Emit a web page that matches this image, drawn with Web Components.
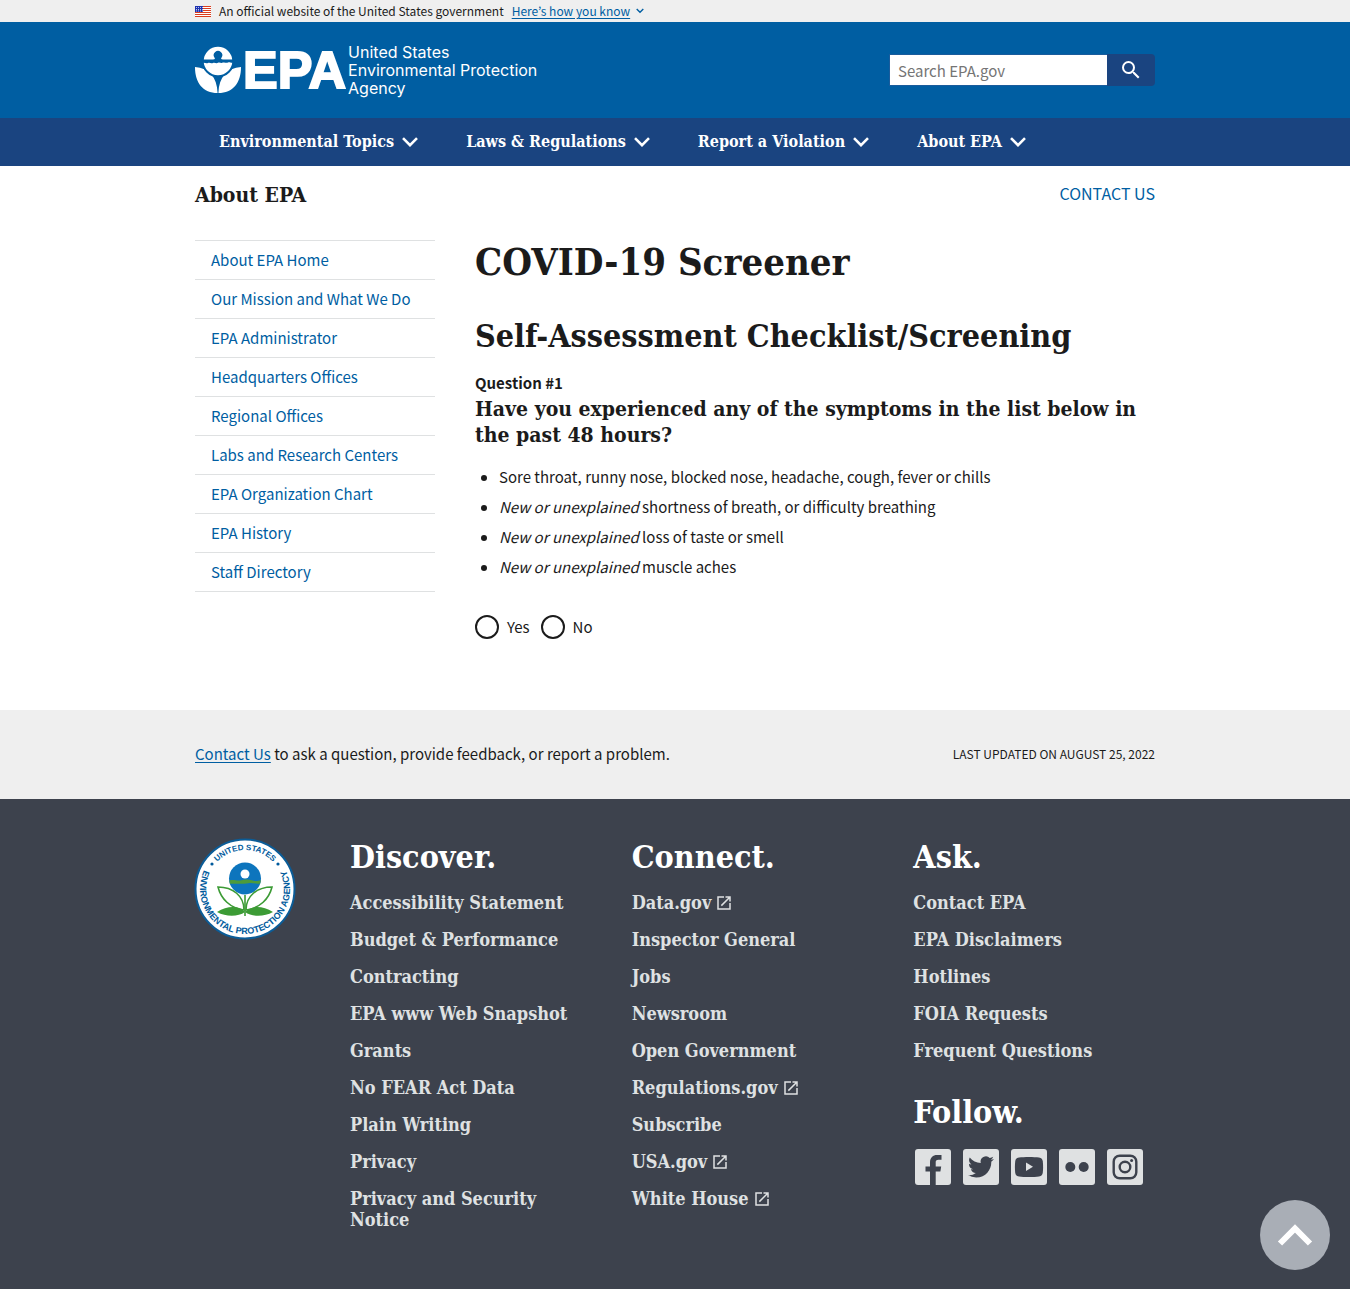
<!DOCTYPE html>
<html lang="en">
<head>
<meta charset="utf-8">
<meta name="viewport" content="width=device-width, initial-scale=1">
<title>COVID-19 Screener | US EPA</title>
<style>
  :root {
    --sans: "Noto Sans CJK JP", "Noto Sans", sans-serif;
    --serif: "DejaVu Serif Condensed", "DejaVu Serif", serif;
    --ink: #1b1b1b;
    --link: #005ea2;
    --navy: #1a4480;
    --pale: #dfe1e2;
    --slate: #3d424d;
    --mist: #efefef;
    --gutter: max(32px, calc((100% - 960px) / 2));
  }
  body { margin: 0; background: #fff; color: var(--ink); font: 15px/26px var(--sans); }
</style>
</head>
<body>
<gov-banner></gov-banner>
<epa-header></epa-header>
<epa-nav>
  <epa-nav-item>Environmental Topics</epa-nav-item>
  <epa-nav-item>Laws &amp; Regulations</epa-nav-item>
  <epa-nav-item>Report a Violation</epa-nav-item>
  <epa-nav-item>About EPA</epa-nav-item>
</epa-nav>
<epa-page>
  <span slot="area">About EPA</span>
  <side-nav slot="side">
    <side-link>About EPA Home</side-link>
    <side-link>Our Mission and What We Do</side-link>
    <side-link>EPA Administrator</side-link>
    <side-link>Headquarters Offices</side-link>
    <side-link>Regional Offices</side-link>
    <side-link>Labs and Research Centers</side-link>
    <side-link>EPA Organization Chart</side-link>
    <side-link>EPA History</side-link>
    <side-link>Staff Directory</side-link>
  </side-nav>
  <covid-screener></covid-screener>
</epa-page>
<page-feedback></page-feedback>
<epa-footer>
  <footer-group slot="discover" heading="Discover.">
    <footer-link>Accessibility Statement</footer-link>
    <footer-link>Budget &amp; Performance</footer-link>
    <footer-link>Contracting</footer-link>
    <footer-link>EPA www Web Snapshot</footer-link>
    <footer-link>Grants</footer-link>
    <footer-link>No FEAR Act Data</footer-link>
    <footer-link>Plain Writing</footer-link>
    <footer-link>Privacy</footer-link>
    <footer-link>Privacy and Security Notice</footer-link>
  </footer-group>
  <footer-group slot="connect" heading="Connect.">
    <footer-link external>Data.gov</footer-link>
    <footer-link>Inspector General</footer-link>
    <footer-link>Jobs</footer-link>
    <footer-link>Newsroom</footer-link>
    <footer-link>Open Government</footer-link>
    <footer-link external>Regulations.gov</footer-link>
    <footer-link>Subscribe</footer-link>
    <footer-link external>USA.gov</footer-link>
    <footer-link external>White House</footer-link>
  </footer-group>
  <footer-group slot="ask" heading="Ask.">
    <footer-link>Contact EPA</footer-link>
    <footer-link>EPA Disclaimers</footer-link>
    <footer-link>Hotlines</footer-link>
    <footer-link>FOIA Requests</footer-link>
    <footer-link>Frequent Questions</footer-link>
  </footer-group>
  <footer-group slot="ask" heading="Follow.">
    <social-links></social-links>
  </footer-group>
</epa-footer>
<back-to-top></back-to-top>

<script>
const define = (name, html) => {
  const template = document.createElement('template');
  template.innerHTML = html;
  customElements.define(name, class extends HTMLElement {
    constructor() {
      super();
      this.attachShadow({ mode: 'open' }).append(template.content.cloneNode(true));
    }
    connectedCallback() {
      const heading = this.shadowRoot.querySelector('[data-heading]');
      if (heading) heading.textContent = this.getAttribute('heading');
    }
  });
};

define('gov-banner', `
<style>
  :host { display: block; background: var(--mist); padding: 0 var(--gutter); font-size: 12px; line-height: 22px; }
  div { display: flex; align-items: center; gap: 8px; }
  a { color: var(--link); display: flex; align-items: center; gap: 6px; text-decoration: none; }
  u { text-underline-offset: 2px; }
  svg { display: block; }
</style>
<div>
  <svg width="16" height="11" viewBox="0 0 16 11" aria-hidden="true">
    <rect width="16" height="11" fill="#fff"/>
    <path d="M0 .5h16M0 2.5h16M0 4.5h16M0 6.5h16M0 8.5h16M0 10.5h16" stroke="#db3e1f"/>
    <rect width="8" height="6" fill="#1e33b1"/>
    <path d="M1 1.5h7M1 3.5h7M1 5h7" stroke="#fff" stroke-width=".7" stroke-dasharray="1 1"/>
  </svg>
  <span>An official website of the United States government</span>
  <a href="#"><u>Here’s how you know</u>
    <svg width="8" height="6" viewBox="0 0 8 6" fill="none" stroke="currentColor" stroke-width="1.4"><path d="M.7 1 4 4.3 7.3 1"/></svg>
  </a>
</div>`);

define('epa-logo', `
<style>
  :host { display: block; }
  a { display: flex; align-items: center; color: #fff; text-decoration: none; }
  svg { display: block; }
  b { font: bold 52px/48px "Liberation Sans", sans-serif; -webkit-text-stroke: 2px #fff; padding: 0 2px; }
  span { display: block; font: 16px/18px Inter, "Liberation Sans", sans-serif; }
</style>
<a href="#">
  <svg width="46" height="48" viewBox="0 0 46 48" aria-hidden="true">
    <path fill="#fff" d="M0 21C14 22 22 31 22.600 47 8 47 0 37 0 21zM46 21C32 22 24 31 23.400 47 38 47 46 37 46 21z"/>
    <circle cx="23" cy="15" r="15.300" fill="#fff" stroke="#005ea2" stroke-width="2"/>
    <path fill="#005ea2" d="M8 13.6h10c2 0 2.300-.8 1.400-2a4.300 4.300 0 1 1 7.200 0c-.9 1.200-.6 2 1.400 2h10v3c-2 .9-3-.9-5-.2-2 1.200-3-.5-5 .2-2 1.200-3-.6-5 .2-2 1-3-.6-5 .1-2 1-3-.6-5 .1-2 .6-3-.4-5-.1z"/>
  </svg>
  <b>EPA</b>
  <div><span>United States</span><span>Environmental Protection</span><span>Agency</span></div>
</a>`);

define('site-search', `
<style>
  :host { display: block; }
  form { display: flex; margin: 0; }
  input { box-sizing: border-box; width: 218px; height: 32px; border: 1px solid #1a5c9c; border-right: 0; padding: 0 8px; background: #fff; border-radius: 0; font: 15px/20px var(--sans); color: var(--ink); }
  input::placeholder { color: #757575; opacity: 1; }
  button { width: 48px; height: 32px; border: 0; padding: 0; border-radius: 0 4px 4px 0; background: var(--navy); display: grid; place-items: center; }
</style>
<form role="search">
  <input type="search" aria-label="Search" placeholder="Search EPA.gov">
  <button type="button" aria-label="Search">
    <svg width="24" height="24" viewBox="0 0 24 24" fill="#fff"><path d="M15.500 14h-.79l-.28-.27A6.470 6.470 0 0 0 16 9.500 6.500 6.500 0 1 0 9.500 16c1.610 0 3.090-.59 4.230-1.570l.27.280v.79l5 4.990L20.490 19zm-6 0a4.500 4.500 0 1 1 0-9 4.500 4.500 0 0 1 0 9z"/></svg>
  </button>
</form>`);

define('epa-header', `
<style>
  :host { display: flex; justify-content: space-between; align-items: center; background: var(--link); padding: 22px var(--gutter); height: 52px; }
</style>
<epa-logo></epa-logo><site-search></site-search>`);

define('epa-nav', `
<style>
  :host { display: block; background: var(--navy); padding: 0 var(--gutter); }
  nav { display: flex; }
</style>
<nav><slot></slot></nav>`);

define('epa-nav-item', `
<style>
  :host { display: block; }
  button { display: flex; align-items: center; gap: 8px; border: 0; background: none; color: #fff; padding: 0 24px; height: 48px; font: bold 16px/20px var(--serif); white-space: nowrap; }
</style>
<button type="button"><slot></slot>
  <svg width="16" height="10" viewBox="0 0 16 10" fill="none" stroke="#fff" stroke-width="2.600"><path d="M1 1.200 8 8.200l7-7"/></svg>
</button>`);

define('epa-page', `
<style>
  :host { display: block; padding: 16px var(--gutter) 70px; }
  header { display: flex; justify-content: space-between; align-items: flex-start; height: 26px; padding-bottom: 32px; }
  h2 { margin: 0; font: bold 21px/26px var(--serif); }
  a { color: var(--link); text-decoration: none; text-transform: uppercase; font-size: 16px; line-height: 22px; }
  main { display: grid; grid-template-columns: minmax(0, 240px) minmax(0, 680px); gap: 40px; }
</style>
<header><h2><slot name="area"></slot></h2><a href="#">Contact Us</a></header>
<main><slot name="side"></slot><slot></slot></main>`);

define('side-nav', `
<style>
  :host { display: block; }
  nav { border-bottom: 1px solid #dfe1e2; }
</style>
<nav><slot></slot></nav>`);

define('side-link', `
<style>
  :host { display: block; border-top: 1px solid #dfe1e2; }
  a { display: block; padding: 6px 16px; color: var(--link); text-decoration: none; }
</style>
<a href="#"><slot></slot></a>`);

define('covid-screener', `
<style>
  :host { display: block; }
  h1, h2, h3, p, ul { margin: 0; }
  h1 { font: bold 38px/44px var(--serif); margin-bottom: 30px; }
  h2 { font: bold 32px/44px var(--serif); margin-bottom: 12px; }
  h3 { font: bold 21px/26px var(--serif); margin-bottom: 16px; }
  strong { display: block; }
  ul { padding-left: 24px; display: flex; flex-direction: column; gap: 4px; }
  fieldset { border: 0; margin: 34px 0 0; padding: 0; display: flex; gap: 11px; }
  label { display: flex; align-items: center; gap: 8px; }
  input { appearance: none; box-sizing: border-box; width: 24px; height: 24px; margin: 0; border: 2px solid var(--ink); border-radius: 50%; background: #fff; }
  input:checked { background: var(--link); box-shadow: inset 0 0 0 3px #fff; }
</style>
<h1>COVID-19 Screener</h1>
<h2>Self-Assessment Checklist/Screening</h2>
<strong>Question #1</strong>
<h3>Have you experienced any of the symptoms in the list below in the past 48 hours?</h3>
<ul>
  <li>Sore throat, runny nose, blocked nose, headache, cough, fever or chills</li>
  <li><em>New or unexplained</em> shortness of breath, or difficulty breathing</li>
  <li><em>New or unexplained</em> loss of taste or smell</li>
  <li><em>New or unexplained</em> muscle aches</li>
</ul>
<fieldset>
  <label><input type="radio" name="symptoms" value="yes">Yes</label>
  <label><input type="radio" name="symptoms" value="no">No</label>
</fieldset>`);

define('page-feedback', `
<style>
  :host { display: flex; justify-content: space-between; align-items: center; background: var(--mist); padding: 31px var(--gutter) 32px; }
  a { color: var(--link); text-underline-offset: 2px; }
  small { font-size: 12px; text-transform: uppercase; }
</style>
<span><a href="#">Contact Us</a> to ask a question, provide feedback, or report a problem.</span>
<small>Last updated on August 25, 2022</small>`);

define('epa-seal', `
<style>
  :host { display: block; }
  svg { display: block; overflow: visible; }
  text { font: bold 8px "Liberation Sans", sans-serif; fill: #005a9c; }
  .ring { font-size: 9px; }
</style>
<svg width="100" height="100" viewBox="0 0 100 100" role="img" aria-label="EPA seal">
  <defs>
    <path id="top" d="M11 50a39 39 0 0 1 78 0"/>
    <path id="ring" d="M50 5a45 45 0 0 0 0 90a45 45 0 0 0 0-90"/>
  </defs>
  <circle cx="50" cy="50" r="49.500" fill="#fff" stroke="#0b5c97" stroke-width="2"/>
  <text text-anchor="middle"><textPath href="#top" startOffset="50%">UNITED STATES</textPath></text>
  <text class="ring" text-anchor="middle"><textPath href="#ring" startOffset="50%">ENVIRONMENTAL PROTECTION AGENCY</textPath></text>
  <circle cx="17" cy="25" r="1.600" fill="#005a9c"/><circle cx="83" cy="25" r="1.600" fill="#005a9c"/>
  <circle cx="50" cy="39.500" r="16" fill="#0d75bd"/>
  <path d="M34.300 41.500c5-1.500 8 1 12-.3s8-.8 11.500.3 5 .3 8-.3l-.6 3.200c-4 1-8-1-12-.2s-9 .5-18.300.5z" fill="#4d9b3c"/>
  <circle cx="50" cy="35" r="4.500" fill="#fff"/>
  <path d="M50 56v21" stroke="#3c9b35" stroke-width="1.600"/>
  <path d="M49 71C35 69 26 60 23 48c15 0 26 9 26 23zM51 71C65 69 74 60 77 48 62 48 51 57 51 71z" fill="#fff" stroke="#3c9b35" stroke-width="1.600"/>
  <path d="M22 73c11-7 23-6 28 0-7 5-19 5-28 0zM78 73c-11-7-23-6-28 0 7 5 19 5 28 0z" fill="#3c9b35"/>
</svg>`);

define('epa-footer', `
<style>
  :host { display: block; background: var(--slate); color: var(--pale); padding: 40px var(--gutter) 59px; }
  footer { display: grid; grid-template-columns: 115px repeat(3, minmax(0, 1fr)); gap: 40px; }
  .stack { display: flex; flex-direction: column; gap: 33px; }
</style>
<footer>
  <epa-seal></epa-seal>
  <slot name="discover"></slot>
  <slot name="connect"></slot>
  <div class="stack"><slot name="ask"></slot></div>
</footer>`);

define('footer-group', `
<style>
  :host { display: block; }
  h2 { margin: 0 0 17px; font: bold 32px/36px var(--serif); color: #fff; }
  div { display: flex; flex-direction: column; gap: 16px; }
</style>
<h2 data-heading></h2><div><slot></slot></div>`);

define('footer-link', `
<style>
  :host { display: flex; }
  a { color: var(--pale); text-decoration: none; font: bold 18px/21px var(--serif); display: flex; align-items: center; gap: 4px; }
  svg { display: none; }
  :host([external]) svg { display: block; }
</style>
<a href="#"><span><slot></slot></span>
  <svg width="18" height="18" viewBox="0 0 24 24" fill="currentColor"><path d="M19 19H5V5h7V3H3v18h18v-9h-2zM14 3v2h3.590l-9.830 9.830 1.410 1.410L19 6.410V10h2V3z"/></svg>
</a>`);

define('social-links', `
<style>
  :host { display: block; padding: 2px; }
  nav { display: flex; gap: 12px; }
  a { display: block; }
  svg { display: block; }
  .ink { fill: var(--slate); }
  .line { fill: none; stroke: var(--slate); stroke-width: 2.400; }
</style>
<nav>
  <a href="#" aria-label="Facebook"><svg width="36" height="36" viewBox="0 0 36 36"><rect width="36" height="36" rx="3" fill="#dfe1e2"/><path class="ink" d="M15 36V22.500h-4.500V17.500H15v-4C15 8.500 18 6 22 6h4.500v4.800H23.500c-2.300 0-2.800 1-2.800 2.700v4h5.500l-.8 5h-4.700V36z"/></svg></a>
  <a href="#" aria-label="Twitter"><svg width="36" height="36" viewBox="0 0 36 36"><rect width="36" height="36" rx="3" fill="#dfe1e2"/><path class="ink" transform="translate(5 5) scale(1.080)" d="M23.950 4.570a10 10 0 0 1-2.820.77 4.960 4.960 0 0 0 2.160-2.720c-.95.55-2 .95-3.130 1.180a4.920 4.920 0 0 0-8.380 4.480C7.690 8.090 4.070 6.130 1.640 3.160a4.820 4.820 0 0 0-.67 2.480c0 1.710.87 3.210 2.190 4.100a4.900 4.900 0 0 1-2.230-.62v.06a4.920 4.920 0 0 0 3.950 4.830 5 5 0 0 1-2.210.08 4.940 4.940 0 0 0 4.600 3.420A9.870 9.870 0 0 1 0 19.540a14 14 0 0 0 7.550 2.210c9.050 0 14-7.500 14-13.980 0-.21 0-.42-.02-.63a9.940 9.940 0 0 0 2.460-2.550z"/></svg></a>
  <a href="#" aria-label="YouTube"><svg width="36" height="36" viewBox="0 0 36 36"><rect width="36" height="36" rx="3" fill="#dfe1e2"/><path class="ink" d="M8 8.500c5-.7 15-.7 20 0 2.500.4 3.500 1.500 3.800 4 .4 3.500.4 7.500 0 11-.3 2.500-1.300 3.600-3.800 4-5 .7-15 .7-20 0-2.500-.4-3.500-1.500-3.800-4-.4-3.500-.4-7.500 0-11 .3-2.500 1.300-3.600 3.800-4z"/><path fill="#dfe1e2" d="m15 13.500 7 4.300-7 4.200z"/></svg></a>
  <a href="#" aria-label="Flickr"><svg width="36" height="36" viewBox="0 0 36 36"><rect width="36" height="36" rx="3" fill="#dfe1e2"/><circle class="ink" cx="11.300" cy="18" r="5"/><circle class="ink" cx="24.700" cy="18" r="5"/></svg></a>
  <a href="#" aria-label="Instagram"><svg width="36" height="36" viewBox="0 0 36 36"><rect width="36" height="36" rx="3" fill="#dfe1e2"/><rect class="line" x="6.700" y="6.700" width="22.600" height="22.600" rx="6"/><circle class="line" cx="18" cy="18" r="5.300"/><circle class="ink" cx="24.600" cy="11.400" r="1.500"/></svg></a>
</nav>`);

define('back-to-top', `
<style>
  :host { display: block; position: fixed; right: 20px; bottom: 20px; }
  button { display: grid; place-items: center; width: 70px; height: 70px; padding: 0; border: 0; border-radius: 50%; background: #a9aeb6; }
</style>
<button type="button" aria-label="Back to top">
  <svg width="36" height="24" viewBox="0 0 36 24" fill="none" stroke="#fff" stroke-width="6"><path d="M3 20.500 18 5.500l15 15"/></svg>
</button>`);
</script>
</body>
</html>
